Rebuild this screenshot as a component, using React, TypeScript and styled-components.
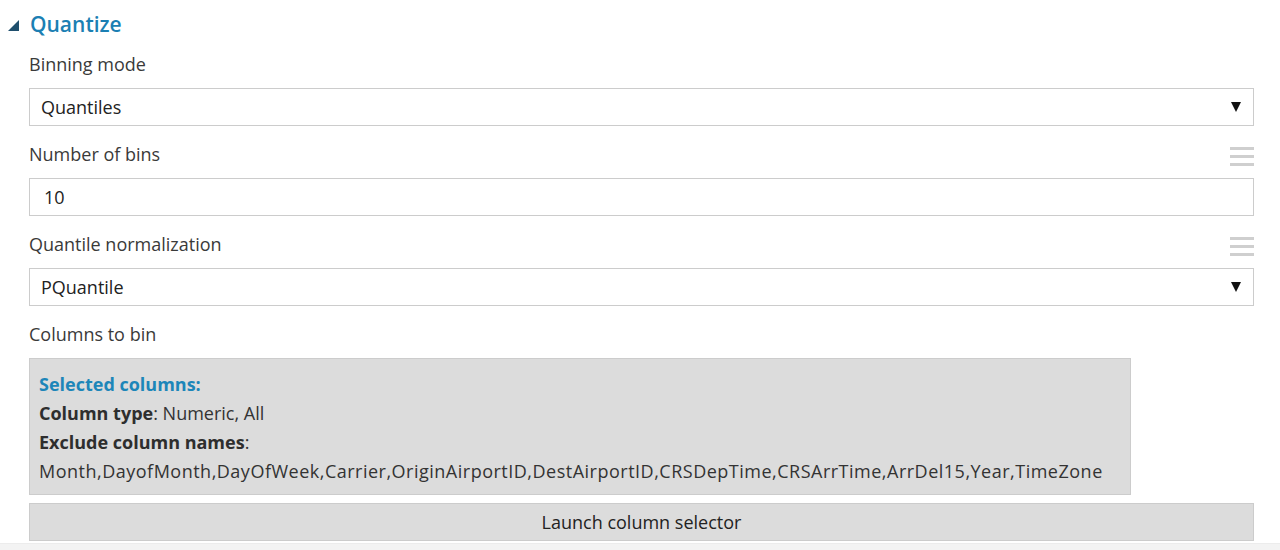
import React from "react";
import styled, { createGlobalStyle } from "styled-components";

const Global = createGlobalStyle`
  html, body { margin: 0; padding: 0; background: #ffffff; }
  body { font-family: "Open Sans", "Noto Sans", sans-serif; color: #333; }
  * { box-sizing: border-box; }
`;

const Page = styled.div`
  width: 1280px;
  height: 550px;
  overflow: hidden;
  display: flex;
  flex-direction: column;
`;

const Header = styled.div`
  display: flex;
  align-items: center;
  gap: 11px;
  padding: 12px 0 0 8px;
  height: 36px;
  flex: none;
`;

const Collapse = styled.svg`
  width: 11px;
  height: 11px;
  flex: none;
  margin-top: 2px;
`;

const Title = styled.div`
  font-size: 21px;
  line-height: 24px;
  font-weight: 600;
  color: #1b7fb3;
`;

const Body = styled.div`
  padding: 0 26px 0 29px;
  display: flex;
  flex-direction: column;
`;

const LabelRow = styled.div`
  display: flex;
  justify-content: space-between;
  align-items: flex-start;
  padding-top: 16px;
  height: 52px;
  flex: none;
`;

const Label = styled.div`
  font-size: 18px;
  line-height: 24px;
  color: #3a3a3a;
`;

const Handle = styled.div`
  width: 24px;
  display: flex;
  flex-direction: column;
  gap: 5px;
  margin-top: 5px;
  span {
    display: block;
    height: 3px;
    background: #cfcfcf;
  }
`;

const Control = styled.div<{ $pad?: number }>`
  height: 38px;
  flex: none;
  border: 1px solid #cccccc;
  background: #fff;
  display: flex;
  align-items: center;
  justify-content: space-between;
  padding: 0 12px 0 ${(p) => p.$pad ?? 11}px;
  font-size: 18px;
  color: #222;
`;

const Arrow = styled.svg`
  width: 10px;
  height: 10px;
`;

const SelectedBox = styled.div`
  width: 1102px;
  background: #dcdcdc;
  border: 1px solid #cccccc;
  padding: 11px 9px 8px;
  font-size: 18px;
  line-height: 29px;
  color: #333;
`;

const BoxTitle = styled.div`
  font-weight: 700;
  color: #1d86b9;
`;

const Strong = styled.b`
  font-weight: 700;
  color: #2e2e2e;
`;

const NameList = styled.div`
  letter-spacing: 0.5px;
  white-space: nowrap;
`;

const LaunchButton = styled.div`
  margin-top: 8px;
  height: 38px;
  flex: none;
  background: #dcdcdc;
  border: 1px solid #cccccc;
  display: flex;
  align-items: center;
  justify-content: center;
  font-size: 18px;
  color: #222;
`;

const BottomBand = styled.div`
  margin-top: 2px;
  flex: 1;
  background: #f3f3f3;
  border-top: 1px solid #ececec;
`;

const DropArrow = () => (
  <Arrow viewBox="0 0 10 10">
    <polygon points="0,0 10,0 5,10" fill="#111" />
  </Arrow>
);

const Grip = () => (
  <Handle>
    <span />
    <span />
    <span />
  </Handle>
);

export default function App() {
  return (
    <>
      <Global />
      <Page>
        <Header>
          <Collapse viewBox="0 0 11 11">
            <polygon points="11,0 11,11 0,11" fill="#1f4f6d" />
          </Collapse>
          <Title>Quantize</Title>
        </Header>
        <Body>
          <LabelRow>
            <Label>Binning mode</Label>
          </LabelRow>
          <Control>
            <span>Quantiles</span>
            <DropArrow />
          </Control>

          <LabelRow>
            <Label>Number of bins</Label>
            <Grip />
          </LabelRow>
          <Control $pad={14}>
            <span>10</span>
          </Control>

          <LabelRow>
            <Label>Quantile normalization</Label>
            <Grip />
          </LabelRow>
          <Control>
            <span>PQuantile</span>
            <DropArrow />
          </Control>

          <LabelRow>
            <Label>Columns to bin</Label>
          </LabelRow>
          <SelectedBox>
            <BoxTitle>Selected columns:</BoxTitle>
            <div>
              <Strong>Column type</Strong>: Numeric, All
            </div>
            <div>
              <Strong>Exclude column names</Strong>:
            </div>
            <NameList>
              Month,DayofMonth,DayOfWeek,Carrier,OriginAirportID,DestAirportID,CRSDepTime,CRSArrTime,ArrDel15,Year,TimeZone
            </NameList>
          </SelectedBox>
          <LaunchButton>Launch column selector</LaunchButton>
        </Body>
        <BottomBand />
      </Page>
    </>
  );
}
